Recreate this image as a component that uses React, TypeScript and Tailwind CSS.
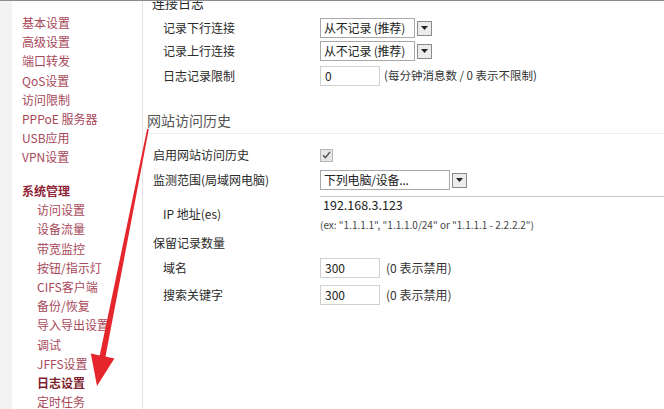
import React from "react";

const font = { fontFamily: '"Noto Sans CJK SC", "Liberation Sans", sans-serif' };

function DropBtn() {
  return (
    <div className="flex h-[15px] w-[15px] shrink-0 items-center justify-center border border-[#8a8a8a] bg-[#ececec]">
      <svg width="7" height="4" viewBox="0 0 7 4">
        <polygon points="0,0 7,0 3.5,4" fill="#222" />
      </svg>
    </div>
  );
}

function Select({ text, width }: { text: string; width: string }) {
  return (
    <div className={`flex h-[20px] items-center gap-[2px] ${width}`}>
      <div className="flex h-[20px] min-w-0 flex-1 items-center overflow-hidden whitespace-nowrap border border-[#a8a8a8] bg-white pl-[3px] text-[12px] tracking-[-0.2px] text-[#222]">
        {text}
      </div>
      <DropBtn />
    </div>
  );
}

function Input({ value }: { value: string }) {
  return (
    <div className="flex h-[20px] w-[60px] items-center border border-[#d0d0d0] bg-white pl-[4px] text-[12px] text-[#222]">
      {value}
    </div>
  );
}

const sideMain = ["基本设置", "高级设置", "端口转发", "QoS设置", "访问限制", "PPPoE 服务器", "USB应用", "VPN设置"];
const sideSub = ["访问设置", "设备流量", "带宽监控", "按钮/指示灯", "CIFS客户端", "备份/恢复", "导入导出设置", "调试", "JFFS设置"];

export default function App() {
  return (
    <div
      className="relative h-[409px] w-[664px] overflow-hidden border-t border-[#8c8c8c] bg-white"
      style={font}
    >
      <div className="flex h-full">
        {/* sidebar */}
        <div className="flex h-full w-[143px] shrink-0 bg-[#f3f3f3]">
          <div className="ml-[12px] h-full flex-1 border-r border-[#e4e4e4] bg-white pt-[12px] text-[12px] leading-[19.2px] text-[#a8485a]">
            {sideMain.map((t) => (
              <div key={t} className="pl-[10px]">{t}</div>
            ))}
            <div className="mt-[14.4px] pl-[10px] font-bold text-[#8f2436]">系统管理</div>
            {sideSub.map((t) => (
              <div key={t} className="pl-[25px]">{t}</div>
            ))}
            <div className="pl-[25px] font-bold text-[#7e1f2f]">日志设置</div>
            <div className="pl-[25px]">定时任务</div>
          </div>
        </div>

        {/* content */}
        <div className="flex-1 text-[12px] text-[#2a2a2a]">
          <div className="mt-[-6px] h-[16px] pl-[9px] text-[13px] leading-[16px]">连接日志</div>

          <div className="mt-[7px] flex h-[20px] items-center">
            <div className="w-[177px] pl-[20px]">记录下行连接</div>
            <Select text="从不记录 (推荐)" width="w-[112px]" />
          </div>
          <div className="mt-[3px] flex h-[20px] items-center">
            <div className="w-[177px] pl-[20px]">记录上行连接</div>
            <Select text="从不记录 (推荐)" width="w-[112px]" />
          </div>
          <div className="mt-[5px] flex h-[20px] items-center">
            <div className="w-[177px] pl-[20px]">日志记录限制</div>
            <Input value="0" />
            <div className="ml-[4px] text-[11.5px] text-[#333]">(每分钟消息数 / 0 表示不限制)</div>
          </div>

          <div className="mt-[25px] h-[23px] border-b border-[#ececec] pl-[4px] text-[14px] leading-[18px] text-[#555]">
            网站访问历史
          </div>

          <div className="mt-[11px] flex h-[20px] items-center">
            <div className="w-[177px] pl-[10px]">启用网站访问历史</div>
            <div className="flex h-[13px] w-[13px] items-center justify-center border border-[#b5b5b5] bg-[#e6e6e6]">
              <svg width="9" height="8" viewBox="0 0 9 8">
                <path d="M1 4.2 L3.4 6.6 L8 1" stroke="#555" strokeWidth="1.4" fill="none" />
              </svg>
            </div>
          </div>
          <div className="mt-[5px] flex h-[20px] items-center">
            <div className="w-[177px] pl-[10px]">监测范围(局域网电脑)</div>
            <Select text="下列电脑/设备..." width="w-[147px]" />
          </div>

          <div className="mt-[6px] flex h-[36px] items-center">
            <div className="w-[177px] pl-[20px]">IP 地址(es)</div>
            <div className="flex h-full flex-1 flex-col">
              <div className="flex h-[18px] items-center border-t border-[#c8c8c8] pl-[3px] text-[12.5px] text-[#222]">
                192.168.3.123
              </div>
              <div className="mt-[4px] h-[14px] whitespace-nowrap text-[10px] leading-[14px] text-[#444]">
                (ex: "1.1.1.1", "1.1.1.0/24" or "1.1.1.1 - 2.2.2.2")
              </div>
            </div>
          </div>

          <div className="mt-[2px] flex h-[18px] items-center pl-[10px]">保留记录数量</div>

          <div className="mt-[6px] flex h-[20px] items-center">
            <div className="w-[177px] pl-[20px]">域名</div>
            <Input value="300" />
            <div className="ml-[6px] text-[12px] text-[#333]">(0 表示禁用)</div>
          </div>
          <div className="mt-[7px] flex h-[20px] items-center">
            <div className="w-[177px] pl-[20px]">搜索关键字</div>
            <Input value="300" />
            <div className="ml-[6px] text-[12px] text-[#333]">(0 表示禁用)</div>
          </div>
        </div>
      </div>

      {/* red arrow overlay */}
      <svg className="pointer-events-none absolute left-0 top-0" width="664" height="409" viewBox="0 0 664 409">
        <polygon
          points="147.2,127.8 148.8,128.2 105.5,355.6 114.4,357.4 97,385 90.8,352.6 99.7,354.4"
          fill="#e5262d"
        />
      </svg>
    </div>
  );
}
